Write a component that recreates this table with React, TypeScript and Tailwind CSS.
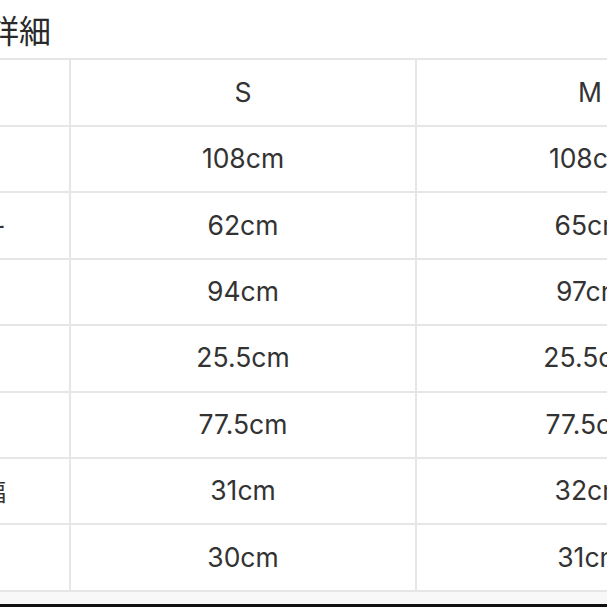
const rows = [
  { label: "胸囲", s: "108cm", m: "108cm" },
  { label: "センター", s: "62cm", m: "65cm" },
  { label: "胴囲", s: "94cm", m: "97cm" },
  { label: "袖口", s: "25.5cm", m: "25.5cm" },
  { label: "袖丈", s: "77.5cm", m: "77.5cm" },
  { label: "わたり幅", s: "31cm", m: "32cm" },
  { label: "裾", s: "30cm", m: "31cm" },
];

const jp = "font-['Noto_Sans_CJK_JP',sans-serif]";
const num = "font-['Inter','Noto_Sans_CJK_JP',sans-serif]";

export default function App() {
  return (
    <div className="w-[607px] h-[607px] overflow-hidden bg-white flex flex-col text-[#333]">
      {/* title */}
      <div className="h-[58px] shrink-0 flex items-start">
        <h1 className={`${jp} -ml-[13px] mt-[9px] text-[32px] leading-[40px] text-[#2a2a2a]`}>詳細</h1>
      </div>

      {/* size table */}
      <div className="-ml-[153px] w-[1000px] border-t-2 border-[#e6e6e6]">
        <div className="flex h-[67px] border-b-2 border-[#e6e6e6]">
          <div className="w-[224px] shrink-0 border-r-2 border-[#e6e6e6]" />
          <div className={`${num} w-[346px] shrink-0 border-r-2 border-[#e6e6e6] flex items-center justify-center text-[26.5px]`}>S</div>
          <div className={`${num} w-[346px] shrink-0 flex items-center justify-center text-[26.5px]`}>M</div>
        </div>
        {rows.map((r) => (
          <div key={r.label} className="flex h-[66.4px] border-b-2 border-[#e6e6e6]">
            <div className={`${jp} w-[224px] shrink-0 border-r-2 border-[#e6e6e6] flex items-center justify-center text-[24px]`}>
              {r.label}
            </div>
            <div className={`${num} w-[346px] shrink-0 border-r-2 border-[#e6e6e6] flex items-center justify-center text-[26.5px]`}>
              {r.s}
            </div>
            <div className={`${num} w-[346px] shrink-0 flex items-center justify-center text-[26.5px]`}>{r.m}</div>
          </div>
        ))}
      </div>

      <div className="flex-1 bg-[#f8f8f8]" />
      <div className="h-[3px] shrink-0 bg-[#111]" />
    </div>
  );
}
